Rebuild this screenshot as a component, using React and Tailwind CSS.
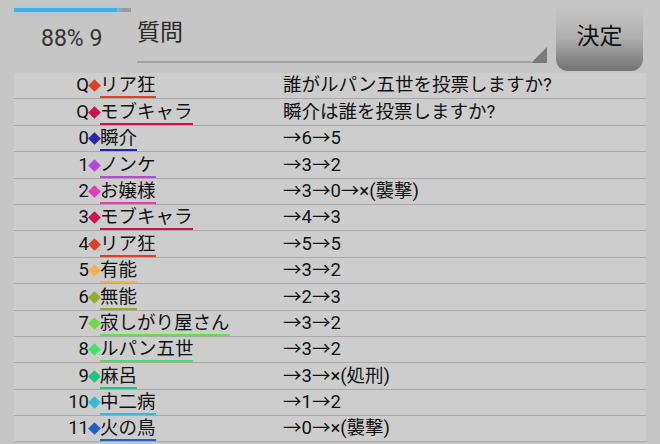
import React from 'react';

const rows = [
  { no: 'Q', name: 'リア狂', color: '#e0401f', text: '誰がルパン五世を投票しますか?' },
  { no: 'Q', name: 'モブキャラ', color: '#d0104c', text: '瞬介は誰を投票しますか?' },
  { no: '0', name: '瞬介', color: '#2a22b0', text: '→6→5' },
  { no: '1', name: 'ノンケ', color: '#b645e6', text: '→3→2' },
  { no: '2', name: 'お嬢様', color: '#e43cb4', text: '→3→0→×(襲撃)' },
  { no: '3', name: 'モブキャラ', color: '#d0104c', text: '→4→3' },
  { no: '4', name: 'リア狂', color: '#e0401f', text: '→5→5' },
  { no: '5', name: '有能', color: '#ffac4c', text: '→3→2' },
  { no: '6', name: '無能', color: '#94b020', text: '→2→3' },
  { no: '7', name: '寂しがり屋さん', color: '#66e040', text: '→3→2' },
  { no: '8', name: 'ルパン五世', color: '#40e466', text: '→3→2' },
  { no: '9', name: '麻呂', color: '#1ec486', text: '→3→×(処刑)' },
  { no: '10', name: '中二病', color: '#2ebcd6', text: '→1→2' },
  { no: '11', name: '火の鳥', color: '#1f5fd0', text: '→0→×(襲撃)' },
];

const font = { fontFamily: "Roboto, 'Noto Sans CJK JP', sans-serif" };

export default function App() {
  return (
    <div className="w-[660px] h-[444px] overflow-hidden bg-[#c6c6c6] text-[#111]" style={font}>
      {/* header */}
      <div className="h-[73px] flex">
        <div className="w-[137px] pl-[14px] pt-[8px] flex flex-col">
          <div className="w-[117px] h-[4px] bg-[#999999] flex">
            <div className="w-[103px] h-full bg-[#3cb2e2] shadow-[2px_0_4px_#7fd6f6]" />
          </div>
          <div className="mt-[13px] pl-[27px] text-[23px] leading-[28px] text-[#333]">88% 9</div>
        </div>
        <div className="w-[410px] h-[63px] flex flex-col">
          <div className="flex-1 pt-[19px] text-[23px] leading-[28px] text-[#2a2a2a]">質問</div>
          <div className="flex items-end">
            <div className="flex-1 h-[2px] bg-[#a0a0a0]" />
            <div className="w-[16px] h-[16px] bg-[#7a7a7a] [clip-path:polygon(100%_0,100%_100%,0_100%)]" />
          </div>
        </div>
        <div className="ml-[9px] mt-[3px] w-[87px] h-[68px] rounded-[12px] bg-gradient-to-b from-[#c8c8c8] via-[#b0b0b0] to-[#737373] flex items-center justify-center text-[23px] text-[#111]">
          決定
        </div>
      </div>

      {/* table */}
      <div className="ml-[14px] w-[632px] bg-[#cdcdcd]">
        {rows.map((r, i) => (
          <div key={i} className="h-[26.4px] flex items-end border-b border-[#a8a8a8] text-[18.5px]">
            <div className="w-[75px] text-right leading-[24px] pb-[1px]">{r.no}</div>
            <div className="w-[11px] h-[25px] flex items-center justify-center">
              <div className="w-[9px] h-[9px] rotate-45" style={{ backgroundColor: r.color }} />
            </div>
            <div className="w-[183px] flex">
              <span className="leading-[22px] border-b-2" style={{ borderColor: r.color }}>
                {r.name}
              </span>
            </div>
            <div className="leading-[24px] pb-[1px]">{r.text}</div>
          </div>
        ))}
      </div>
    </div>
  );
}
